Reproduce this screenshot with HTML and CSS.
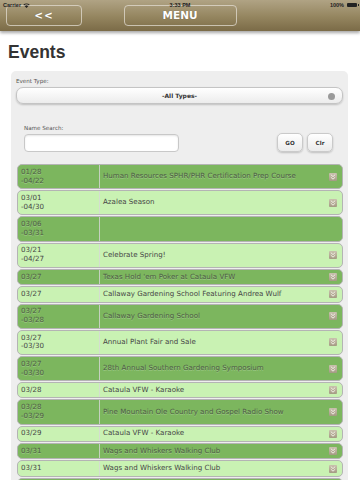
FILE: index.html
```html
<!DOCTYPE html>
<html lang="en">
<head>
    <meta charset="UTF-8">
    <meta name="viewport" content="width=device-width, initial-scale=1.0">
    <title>Events</title>
    <link rel="stylesheet" href="styles.css">
</head>
<body>

    <header class="topbar">
        <div class="status">
            <span class="carrier">Carrier
                <svg class="wifi" width="7" height="5" viewBox="0 0 7 5"><path d="M0.3 1.8 A4.4 4.4 0 0 1 6.7 1.8 L5.9 2.6 A3.3 3.3 0 0 0 1.1 2.6 Z M1.7 3.2 A2.5 2.5 0 0 1 5.3 3.2 L3.5 5 Z" fill="#222"/></svg>
            </span>
            <span class="time">3:33 PM</span>
            <span class="batt">100% <span class="batt-icon"></span></span>
        </div>
        <a class="hbtn back">&lt;&lt;</a>
        <a class="hbtn menu">MENU</a>
    </header>

    <h1 class="title">Events</h1>

    <div class="panel">
        <label class="lbl">Event Type:</label>
        <div class="select">
            <span>-All Types-</span>
            <span class="dot"></span>
        </div>

        <div class="search">
            <div class="search-field">
                <label class="lbl">Name Search:</label>
                <input type="text" class="search-input">
            </div>
            <div class="search-btns">
                <button class="sbtn">GO</button>
                <button class="sbtn">Clr</button>
            </div>
        </div>

        <ul class="list">
            <li class="row dark"><div class="date">01/28<br>-04/22</div><div class="name">Human Resources SPHR/PHR Certification Prep Course</div><i class="more"></i></li>
            <li class="row light"><div class="date">03/01<br>-04/30</div><div class="name">Azalea Season</div><i class="more"></i></li>
            <li class="row dark"><div class="date">03/06<br>-03/31</div><div class="name"></div></li>
            <li class="row light"><div class="date">03/21<br>-04/27</div><div class="name">Celebrate Spring!</div><i class="more"></i></li>
            <li class="row dark"><div class="date">03/27</div><div class="name">Texas Hold 'em Poker at Cataula VFW</div><i class="more"></i></li>
            <li class="row light"><div class="date">03/27</div><div class="name">Callaway Gardening School Featuring Andrea Wulf</div><i class="more"></i></li>
            <li class="row dark"><div class="date">03/27<br>-03/28</div><div class="name">Callaway Gardening School</div><i class="more"></i></li>
            <li class="row light"><div class="date">03/27<br>-03/30</div><div class="name">Annual Plant Fair and Sale</div><i class="more"></i></li>
            <li class="row dark"><div class="date">03/27<br>-03/30</div><div class="name">28th Annual Southern Gardening Symposium</div><i class="more"></i></li>
            <li class="row light"><div class="date">03/28</div><div class="name">Cataula VFW - Karaoke</div><i class="more"></i></li>
            <li class="row dark"><div class="date">03/28<br>-03/29</div><div class="name">Pine Mountain Ole Country and Gospel Radio Show</div><i class="more"></i></li>
            <li class="row light"><div class="date">03/29</div><div class="name">Cataula VFW - Karaoke</div><i class="more"></i></li>
            <li class="row dark"><div class="date">03/31</div><div class="name">Wags and Whiskers Walking Club</div><i class="more"></i></li>
            <li class="row light"><div class="date">03/31</div><div class="name">Wags and Whiskers Walking Club</div><i class="more"></i></li>
            <li class="row dark stub"><div class="date"></div><div class="name"></div></li>
        </ul>
    </div>

</body>
</html>
```

FILE: styles.css
```css
/* base */
body {
    margin: 0;
    font-family: "DejaVu Sans", Verdana, sans-serif;
    background: #fff;
    color: #444;
    overflow: hidden;
}

/* top bar */
.topbar {
    position: relative;
    height: 31px;
    box-sizing: border-box;
    padding-top: 5px;
    display: grid;
    grid-template-columns: 1fr 113px 1fr;
    align-items: start;
    background: linear-gradient(to bottom, #b0a384, #94855f 55%, #7b6b47);
    box-shadow: 0 2px 3px rgba(0, 0, 0, 0.35);
    z-index: 2;
}

.status {
    position: absolute;
    top: 0;
    left: 0;
    right: 0;
    height: 10px;
    padding: 0 3px;
    display: grid;
    grid-template-columns: 1fr auto 1fr;
    align-items: center;
    font-family: "Liberation Sans", Arial, sans-serif;
    font-size: 5.5px;
    font-weight: bold;
    color: #222;
}

.carrier {
    display: flex;
    align-items: center;
    gap: 2px;
}

.batt {
    justify-self: end;
    display: flex;
    align-items: center;
    gap: 3px;
}

.batt-icon {
    width: 10px;
    height: 4px;
    background: #222;
    border-radius: 1px;
    position: relative;
}

.batt-icon::after {
    content: "";
    position: absolute;
    right: -1.5px;
    top: 1px;
    width: 1px;
    height: 2px;
    background: #222;
}

.hbtn {
    height: 20.5px;
    box-sizing: border-box;
    border: 1px solid rgba(225, 220, 210, 0.75);
    border-radius: 4px;
    display: flex;
    align-items: center;
    justify-content: center;
    font-family: "DejaVu Sans", Verdana, sans-serif;
    font-weight: bold;
    font-size: 10.5px;
    color: #fff;
    text-shadow: 0 0 1px rgba(0, 0, 0, 0.3);
}

.back {
    width: 76px;
    margin-left: 6px;
    letter-spacing: 1px;
}

.menu {
    grid-column: 2;
}

/* heading */
.title {
    margin: 11px 0 0 8px;
    font-family: "Liberation Sans", Arial, sans-serif;
    font-size: 17.5px;
    line-height: 20px;
    font-weight: bold;
    color: #333;
}

/* filter panel */
.panel {
    margin: 9px 12px 0 11px;
    padding: 6px 5px 0 5px;
    background: #eeeeee;
    border-radius: 5px 5px 0 0;
}

.lbl {
    display: block;
    font-size: 5.6px;
    line-height: 8px;
    color: #555;
}

.select {
    margin-top: 2px;
    height: 17px;
    box-sizing: border-box;
    border: 1px solid #c4c4c4;
    border-radius: 7px;
    background: linear-gradient(to bottom, #ffffff, #ececec);
    box-shadow: 0 1px 2px rgba(0, 0, 0, 0.2);
    display: flex;
    align-items: center;
    justify-content: center;
    position: relative;
    font-size: 6px;
    font-weight: bold;
    color: #333;
}

.dot {
    position: absolute;
    right: 7px;
    top: 4.5px;
    width: 7px;
    height: 7px;
    border-radius: 50%;
    background: #9a9a9a;
}

.search {
    margin-top: 20px;
    padding: 0 10px 0 8px;
    display: flex;
    justify-content: space-between;
    align-items: flex-end;
}

.search-input {
    display: block;
    margin-top: 2px;
    width: 155px;
    height: 18px;
    box-sizing: border-box;
    border: 1px solid #c8c8c8;
    border-radius: 4px;
    background: #fff;
    box-shadow: inset 0 1px 2px rgba(0, 0, 0, 0.1);
    outline: none;
}

.search-btns {
    display: flex;
    gap: 4px;
}

.sbtn {
    width: 26px;
    height: 19px;
    padding: 0;
    border: 1px solid #cacaca;
    border-radius: 5px;
    background: linear-gradient(to bottom, #ffffff, #ebebeb);
    box-shadow: 0 1px 2px rgba(0, 0, 0, 0.2);
    font-family: "DejaVu Sans", Verdana, sans-serif;
    font-size: 5.6px;
    font-weight: bold;
    color: #333;
}

/* event list */
.list {
    list-style: none;
    margin: 12px 0 0 1px;
    padding: 0;
}

.row {
    display: flex;
    align-items: center;
    margin-bottom: 1px;
    border: 1px solid #b4b4b4;
    border-radius: 5px;
    font-size: 7.1px;
    line-height: 8.8px;
    position: relative;
}

.row.dark {
    background: #7cb65e;
    color: #4e5a46;
    text-shadow: 0 1px 0 rgba(255, 255, 255, 0.25);
}

.row.light {
    background: #c9f2b3;
    color: #464646;
}

.row.stub {
    height: 16px;
}

.date {
    width: 78px;
    flex: none;
    align-self: stretch;
    padding: 2.8px 0 2.8px 3px;
    border-right: 1px solid rgba(215, 215, 215, 0.8);
}

.name {
    flex: 1;
    padding: 2.8px 20px 2.8px 3px;
    white-space: nowrap;
    overflow: hidden;
}

.more {
    position: absolute;
    right: 5px;
    top: 50%;
    margin-top: -4px;
    width: 8px;
    height: 8px;
    border-radius: 1px;
    background:
        url("data:image/svg+xml,%3Csvg xmlns='http://www.w3.org/2000/svg' viewBox='0 0 8 8'%3E%3Cpath d='M1.8 1.6 L4 3.6 L6.2 1.6 M1.8 4.2 L4 6.2 L6.2 4.2' fill='none' stroke='%23f2efe6' stroke-width='1'/%3E%3C/svg%3E") center / 8px 8px no-repeat,
        linear-gradient(to bottom, #c9c1ad, #a49a83);
}
```
